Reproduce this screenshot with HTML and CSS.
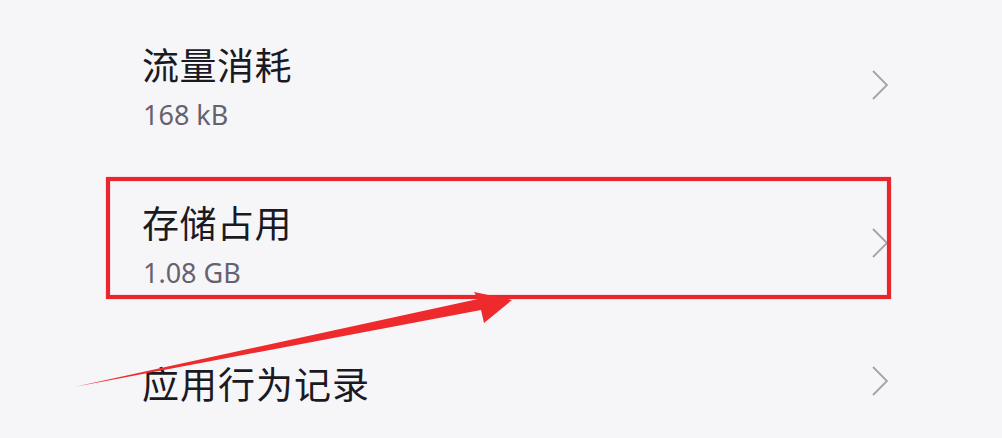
FILE: index.html
```html
<!DOCTYPE html>
<html lang="zh">
<head>
<meta charset="utf-8">
<link rel="stylesheet" href="styles.css">
</head>
<body>
<div class="page">
  <div class="list">
    <div class="row">
      <div class="text">
        <div class="title">流量消耗</div>
        <div class="sub">168 kB</div>
      </div>
      <svg class="chev" viewBox="0 0 16 30" width="16" height="30"><path d="M1 1 L15 15 L1 29" fill="none" stroke="#a3a2a8" stroke-width="1.8"/></svg>
    </div>
    <div class="row">
      <div class="text">
        <div class="title">存储占用</div>
        <div class="sub">1.08 GB</div>
      </div>
      <svg class="chev" viewBox="0 0 16 30" width="16" height="30"><path d="M1 1 L15 15 L1 29" fill="none" stroke="#a3a2a8" stroke-width="1.8"/></svg>
    </div>
    <div class="row single">
      <div class="text">
        <div class="title wide">应用行为记录</div>
      </div>
      <svg class="chev" viewBox="0 0 16 30" width="16" height="30"><path d="M1 1 L15 15 L1 29" fill="none" stroke="#a3a2a8" stroke-width="1.8"/></svg>
    </div>
  </div>
  <svg class="annot" viewBox="0 0 1002 438" width="1002" height="438">
    <rect x="108" y="179" width="781" height="118" fill="none" stroke="#e9262b" stroke-width="4.2"/>
    <polygon points="74,387 478,299 474,292 512,300 484,323 481,310" fill="#ee2a2d"/>
  </svg>
</div>
</body>
</html>
```
FILE: styles.css
```css
html, body {
  margin: 0;
  padding: 0;
}
body {
  background: #f6f6f9;
  width: 1002px;
  height: 438px;
  overflow: hidden;
}
.page {
  position: relative;
  width: 1002px;
  height: 438px;
}
.list {
  display: flex;
  flex-direction: column;
  padding-top: 8px;
}
.row {
  display: flex;
  align-items: center;
  justify-content: space-between;
  padding: 32px 114px 33px 142px;
}
.row.single {
  padding-top: 35px;
}
.text {
  display: flex;
  flex-direction: column;
}
.title {
  font-family: "Noto Sans CJK SC", "Noto Sans", sans-serif;
  font-size: 37px;
  line-height: 48px;
  color: #1b1a22;
  letter-spacing: 0.5px;
}
.title.wide {
  letter-spacing: 1px;
}
.sub {
  font-family: "Noto Sans", "Noto Sans CJK SC", sans-serif;
  font-size: 27px;
  line-height: 36px;
  margin-top: 9px;
  color: #67616f;
  padding-left: 1px;
}
.chev {
  display: block;
  margin-bottom: 4px;
}
.annot {
  position: absolute;
  left: 0;
  top: 0;
  pointer-events: none;
}
```
